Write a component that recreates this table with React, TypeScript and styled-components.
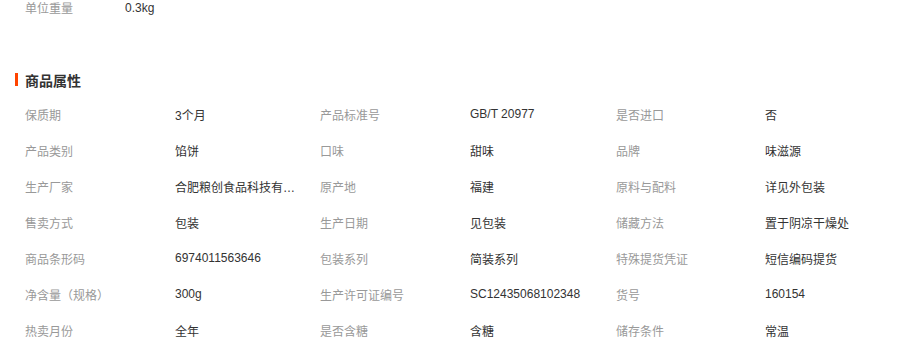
import React from 'react'
import styled, { createGlobalStyle } from 'styled-components'

interface Attr {
  label: string
  value: string
}

const attrs: Attr[] = [
  { label: '保质期', value: '3个月' },
  { label: '产品标准号', value: 'GB/T 20977' },
  { label: '是否进口', value: '否' },
  { label: '产品类别', value: '馅饼' },
  { label: '口味', value: '甜味' },
  { label: '品牌', value: '味滋源' },
  { label: '生产厂家', value: '合肥粮创食品科技有限公司' },
  { label: '原产地', value: '福建' },
  { label: '原料与配料', value: '详见外包装' },
  { label: '售卖方式', value: '包装' },
  { label: '生产日期', value: '见包装' },
  { label: '储藏方法', value: '置于阴凉干燥处' },
  { label: '商品条形码', value: '6974011563646' },
  { label: '包装系列', value: '简装系列' },
  { label: '特殊提货凭证', value: '短信编码提货' },
  { label: '净含量（规格）', value: '300g' },
  { label: '生产许可证编号', value: 'SC12435068102348' },
  { label: '货号', value: '160154' },
  { label: '热卖月份', value: '全年' },
  { label: '是否含糖', value: '含糖' },
  { label: '储存条件', value: '常温' },
]

const GlobalStyle = createGlobalStyle`
  body {
    margin: 0;
    background: #fff;
    font-family: 'Noto Sans CJK SC', 'Noto Sans', sans-serif;
    font-size: 12px;
  }
`

const Page = styled.div`
  width: 903px;
  height: 340px;
  overflow: hidden;
`

const TopRow = styled.div`
  display: flex;
  padding-left: 25px;
  height: 16px;
  line-height: 16px;
`

const TopLabel = styled.span`
  width: 100px;
  color: #999;
`

const TopValue = styled.span`
  color: #333;
  font-family: 'Liberation Sans', 'Noto Sans CJK SC', sans-serif;
`

const SectionTitle = styled.h3`
  position: relative;
  margin: 54px 0 6px;
  padding-left: 25px;
  height: 20px;
  line-height: 20px;
  font-size: 14px;
  font-weight: 700;
  color: #333;

  &::before {
    content: '';
    position: absolute;
    left: 15px;
    top: 3px;
    width: 3px;
    height: 13px;
    background: #ff4400;
  }
`

const Grid = styled.div`
  display: grid;
  grid-template-columns: 150px 145px 150px 146px 149px 1fr;
  grid-auto-rows: 36px;
  padding-left: 25px;
  align-items: center;
`

const Label = styled.div`
  color: #999;
  white-space: nowrap;
`

const Value = styled.div`
  color: #333;
  white-space: nowrap;
  overflow: hidden;
  text-overflow: ellipsis;
  max-width: 122px;
  font-family: 'Liberation Sans', 'Noto Sans CJK SC', sans-serif;
`

const App = () => (
  <Page>
    <GlobalStyle />
    <TopRow>
      <TopLabel>单位重量</TopLabel>
      <TopValue>0.3kg</TopValue>
    </TopRow>
    <SectionTitle>商品属性</SectionTitle>
    <Grid>
      {attrs.map((a, idx) => (
        <React.Fragment key={idx}>
          <Label>{a.label}</Label>
          <Value>{a.value}</Value>
        </React.Fragment>
      ))}
    </Grid>
  </Page>
)

export default App
